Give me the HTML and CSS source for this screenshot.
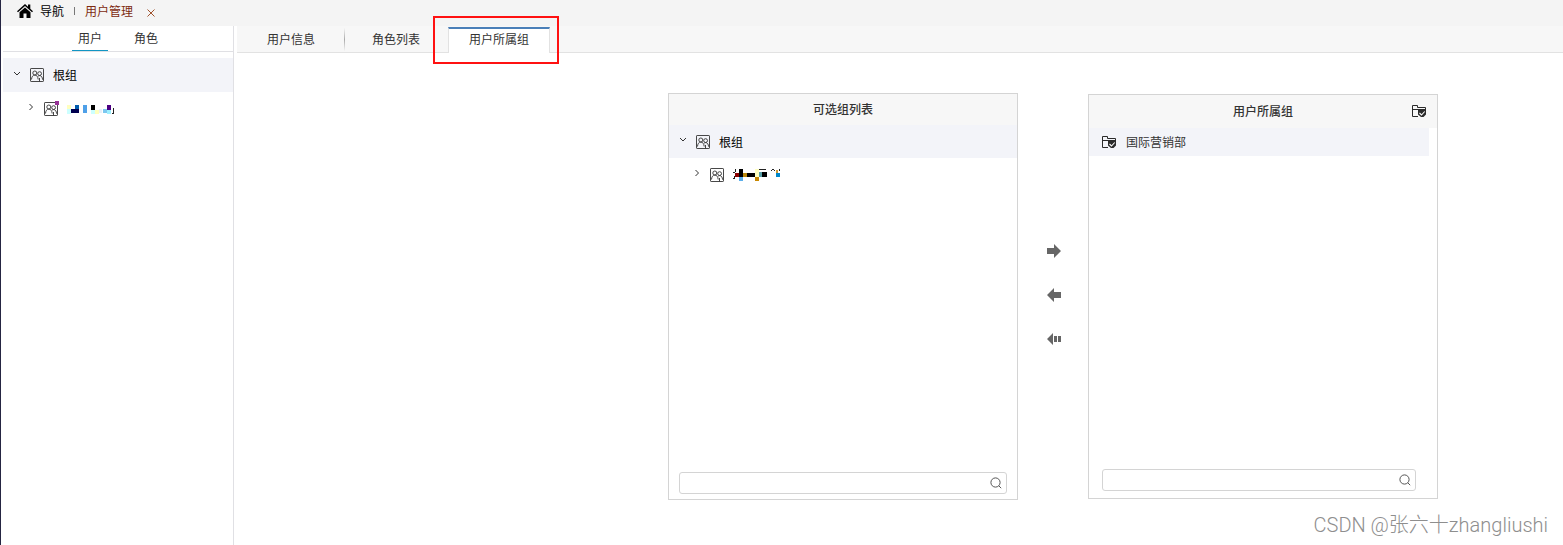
FILE: index.html
```html
<!DOCTYPE html>
<html lang="zh-CN">
<head>
<meta charset="utf-8">
<title>用户管理</title>
<link rel="stylesheet" href="styles.css">
</head>
<body>
<svg class="defs" aria-hidden="true">
  <symbol id="group" viewBox="0 0 14 14">
    <g fill="none" stroke="currentColor" stroke-width=".9">
      <rect x=".5" y=".5" width="13" height="13" rx=".6"/>
      <circle cx="4.800" cy="5" r="2"/>
      <circle cx="9.600" cy="5.600" r="1.900"/>
      <path d="M1.500 11.500c.2-2.700 1.200-4.400 3.300-4.400s3 1.500 3.400 4.400M8.200 8.200c.5-.5.900-.6 1.500-.6 1.800 0 2.700 1.700 2.900 4.100M9.500 10v3.500"/>
    </g>
  </symbol>
  <symbol id="folder" viewBox="0 0 15 12">
    <path d="M6 11.500H.5V.500H5.500V2.500H13.500V4.500M.5 4.500H6" fill="none" stroke="currentColor"/>
    <path d="M6 4h8v5.500L11.500 12H9L6 9.500z" fill="currentColor"/>
    <path d="M7.500 8l2 2 3.200-3.500" fill="none" stroke="#fff" stroke-width="1.100"/>
  </symbol>
  <symbol id="search" viewBox="0 0 12 12">
    <circle cx="5.500" cy="5.500" r="4.600" fill="none" stroke="currentColor"/>
    <path d="M8.800 8.800l2.400 2.400" stroke="currentColor"/>
  </symbol>
  <symbol id="down" viewBox="0 0 8 8"><path d="M1 2l3 3 3-3" fill="none" stroke="currentColor"/></symbol>
  <symbol id="right" viewBox="0 0 8 8"><path d="M2.500 1l3 3-3 3" fill="none" stroke="currentColor"/></symbol>
</svg>
<div class="app">
  <header class="topbar">
    <a class="home" href="#">
      <svg class="home-icon" viewBox="0 0 16 14" aria-hidden="true"><path d="M0 7.200L8 0l3 2.700V.500h2.300v4.200L16 7.200l-1 1L8 2 1 8.200z"/><path d="M2.500 8.200L8 3.400l5.500 4.800V14H9.500V9.500h-3V14h-4z"/></svg>
      导航
    </a>
    <span class="divider"></span>
    <a class="crumb" href="#">用户管理</a>
    <button class="close" aria-label="关闭"><svg viewBox="0 0 8 8"><path d="M.5.5l7 7M7.500.5l-7 7" stroke="currentColor"/></svg></button>
  </header>
  <div class="body">
    <aside class="sidebar">
      <div class="side-tabs">
        <button class="side-tab active">用户</button>
        <button class="side-tab">角色</button>
      </div>
      <div class="tree side-tree">
        <div class="row selected"><svg class="caret"><use href="#down"/></svg><svg class="group"><use href="#group"/></svg><span>根组</span></div>
        <div class="row child"><svg class="caret"><use href="#right"/></svg><span class="flagged"><svg class="group"><use href="#group"/></svg><i class="flag"></i></span>
          <svg class="mosaic" viewBox="0 0 48 12" shape-rendering="crispEdges" aria-hidden="true">
            <path fill="#ffffbf" d="M0 1h4v4H0zM28 6h4v4h-4z"/><path fill="#cff" d="M0 5h4v5H0zM24 6h4v4h-4z"/><path fill="#005bac" d="M8 1h4v4H8z"/><path fill="#00004f" d="M4 5h8v4H4z"/><path fill="#4fa0e8" d="M16 1h4v8h-4z"/><path fill="#000" d="M24 1h4v5h-4z"/><path fill="#e8f0f8" d="M32 5h3v4h-3z"/><path fill="#7cc8f0" d="M36 5h4v4h-4z"/><path fill="#4b0082" d="M40 1h4v5h-4z"/><path fill="#9fefff" d="M40 6h4v4h-4z"/><path fill="#222" d="M46 4h1v6h-2v-1h1z"/>
          </svg>
        </div>
      </div>
    </aside>
    <main class="main">
      <nav class="tabs">
        <button class="tab info">用户信息</button>
        <button class="tab roles">角色列表</button>
        <button class="tab groups">用户所属组<span class="marker"></span></button>
      </nav>
      <div class="transfer">
        <section class="panel available">
          <h2 class="panel-title">可选组列表</h2>
          <div class="tree">
            <div class="row selected"><svg class="caret"><use href="#down"/></svg><svg class="group"><use href="#group"/></svg><span>根组</span></div>
            <div class="row child"><svg class="caret"><use href="#right"/></svg><svg class="group"><use href="#group"/></svg>
              <svg class="mosaic" viewBox="0 0 48 12" shape-rendering="crispEdges" aria-hidden="true">
                <path fill="#222" d="M2 0h1v3H2zM0 3h2v1H0zM1 7h1v3H0V9h1z"/><path fill="#8b0000" d="M2 4h4v4H2z"/><path fill="#000" d="M6 0h4v8H6zM14 4h8v4h-8zM28 3h6v5h-6z"/><path fill="#5aaeea" d="M6 8h4v4H6z"/><path fill="#b8860b" d="M10 4h4v4h-4z"/><path fill="#ffffc0" d="M22 0h4v8h-4z"/><path fill="#c88800" d="M22 8h4v4h-4z"/><path fill="#5aa0a8" d="M26 3h3v5h-3z"/><path fill="#222" d="M26 0h7v1h-7zM38 1h1v1h-1zM39 0h2v1h-2zM41 1h1v1h-1zM46 0h1v2h-1z"/><path fill="#d09a30" d="M43 1h2v3h-2z"/><path fill="#0088cc" d="M43 4h4v4h-4z"/>
              </svg>
            </div>
          </div>
          <label class="search"><input type="text" aria-label="搜索可选组"><svg><use href="#search"/></svg></label>
        </section>
        <div class="moves">
          <button class="move" aria-label="添加"><svg viewBox="0 0 14 14"><path d="M0 4h7V0l7 7-7 7v-4H0z"/></svg></button>
          <button class="move" aria-label="移除"><svg viewBox="0 0 14 14"><path d="M14 4H7V0L0 7l7 7v-4h7z"/></svg></button>
          <button class="move" aria-label="全部移除"><svg viewBox="0 0 14 14"><path d="M6 1v12L0 7zM7 4h3v6H7zM11 4h3v6h-3z"/></svg></button>
        </div>
        <section class="panel assigned">
          <h2 class="panel-title">用户所属组<svg class="folder title-icon"><use href="#folder"/></svg></h2>
          <div class="item"><svg class="folder"><use href="#folder"/></svg>国际营销部</div>
          <label class="search"><input type="text" aria-label="搜索所属组"><svg><use href="#search"/></svg></label>
        </section>
      </div>
    </main>
  </div>
  <div class="watermark">CSDN @张六十zhangliushi</div>
</div>
</body>
</html>
```
FILE: styles.css
```css
* { box-sizing: border-box; }
body {
  margin: 0;
  font: 12px/18px "Noto Sans CJK SC", sans-serif;
  color: #333;
  background: #fff;
}
button {
  padding: 0;
  border: 0;
  background: none;
  font: inherit;
  color: inherit;
}
a { color: inherit; text-decoration: none; }
svg { display: block; flex: none; }
.defs { position: absolute; width: 0; height: 0; }
.app {
  position: relative;
  display: flex;
  flex-direction: column;
  min-height: 100vh;
  border-left: 1px solid #252542;
}
.topbar {
  display: flex;
  align-items: center;
  height: 26px;
  padding: 0 16px 4px;
  background: #f4f4f4;
}
.home { display: flex; align-items: center; gap: 7px; color: #000; }
.home-icon { width: 16px; height: 14px; }
.divider { width: 1px; height: 8px; margin: 0 10px; background: #777; }
.crumb { color: #7d2a10; }
.close { margin: 3px 0 0 14px; color: #a0522d; }
.close svg { width: 8px; height: 8px; }
.body { display: flex; flex: 1; gap: 3px; }
.sidebar {
  flex: none;
  width: 233px;
  padding-left: 2px;
  border-right: 1px solid #e0e0e4;
}
.side-tabs {
  display: flex;
  justify-content: center;
  gap: 20px;
  height: 26px;
  border-bottom: 1px solid #e0e0e4;
}
.side-tab { width: 36px; border-bottom: 1px solid transparent; }
.side-tab.active { border-color: #1296c4; }
.side-tree { padding-top: 6px; }
.row {
  display: flex;
  align-items: center;
  height: 33px;
  padding-left: 10px;
  color: #000;
}
.row.selected { background: #f3f4f9; }
.side-tree .selected { height: 34px; }
.row.child { padding-left: 24px; }
.caret { width: 8px; height: 8px; margin: 0 9px 3px 0; color: #333; }
.group { width: 14px; height: 14px; margin-right: 9px; color: #333; }
.flagged { position: relative; }
.flag {
  position: absolute;
  top: -1px;
  right: 8px;
  width: 4px;
  height: 4px;
  background: #963296;
}
.mosaic { width: 48px; height: 12px; }
.side-tree .mosaic { margin-top: 2px; }
.main { flex: 1; min-width: 0; }
.tabs {
  display: flex;
  height: 27px;
  background: #f7f7f7;
  box-shadow: inset 0 -1px #e2e2e2;
}
.info {
  padding: 0 29px 2px 30px;
  border: 0 solid;
  border-image: linear-gradient(transparent 10%, #aaa 50%, transparent 90%) 1;
  border-width: 0 1px 0 0;
}
.roles { padding: 0 28px 2px 27px; }
.groups {
  position: relative;
  padding: 0 20px 4px;
  margin-top: 1px;
  border: 1px solid #e2e2e2;
  border-top: 2px solid #4a7fb8;
  border-bottom: 0;
  background: #fff;
}
.marker {
  position: absolute;
  inset: -13px -10px -11px -16px;
  border: 2px solid #f11;
}
.transfer {
  display: flex;
  justify-content: flex-end;
  padding: 40px 125px 0 0;
}
.panel {
  display: flex;
  flex-direction: column;
  width: 350px;
  border: 1px solid #d4d4d4;
}
.available { height: 407px; }
.assigned { height: 405px; margin-top: 1px; }
.panel-title {
  position: relative;
  margin: 0;
  padding-bottom: 2px;
  font-size: 12px;
  font-weight: 500;
  line-height: 29px;
  text-align: center;
  background: #f7f7f7;
}
.assigned .panel-title { line-height: 31px; }
.folder { width: 15px; height: 12px; color: #2b2b2b; }
.title-icon { position: absolute; top: 10px; right: 10px; }
.item {
  display: flex;
  align-items: center;
  gap: 9px;
  height: 28px;
  margin-right: 8px;
  padding: 0 0 1px 13px;
  background: #f3f4f9;
}
.search {
  position: relative;
  margin: auto 10px 5px;
}
.assigned .search { margin: auto 21px 7px 13px; }
.search input {
  display: block;
  width: 100%;
  height: 22px;
  padding: 0 22px 0 6px;
  border: 1px solid #d4d4d4;
  border-radius: 3px;
  font: inherit;
}
.search svg {
  position: absolute;
  top: 5px;
  right: 5px;
  width: 12px;
  height: 12px;
  color: #555;
}
.moves {
  display: flex;
  flex-direction: column;
  align-items: center;
  gap: 30px;
  width: 70px;
  padding: 151px 0 0 2px;
}
.move svg { width: 14px; height: 14px; fill: #666; }
.watermark {
  position: absolute;
  right: 15px;
  bottom: 5px;
  font: 300 20px/30px Roboto, "Noto Sans CJK SC", sans-serif;
  color: #8e8e8e;
}
```
